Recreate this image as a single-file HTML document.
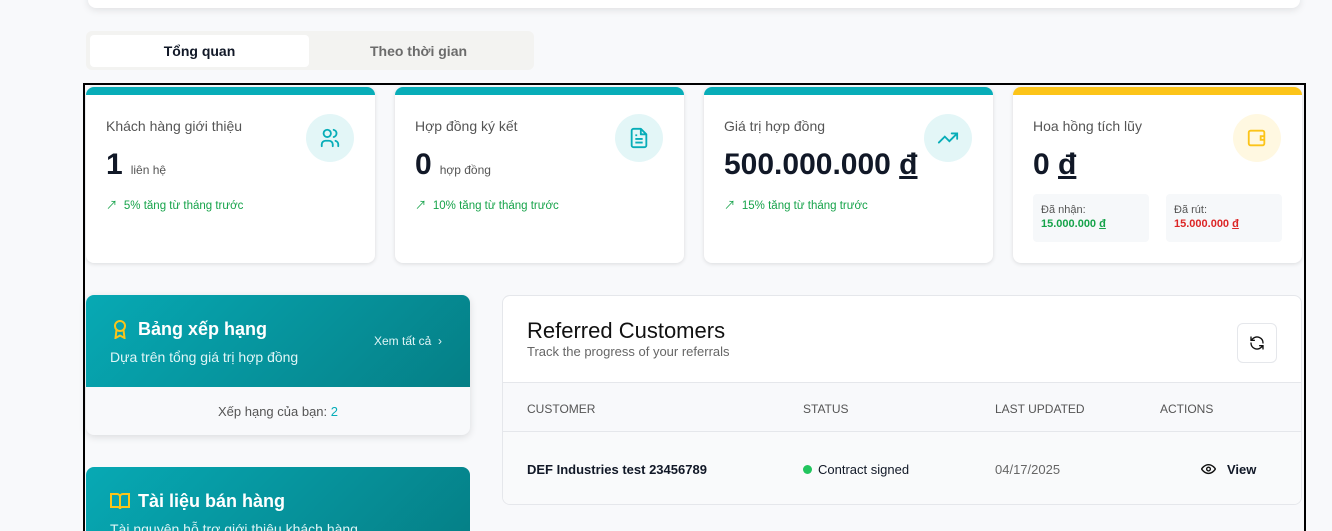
<!DOCTYPE html>
<html style="height:531px;overflow:hidden"><head><meta charset="utf-8"><style>
*{box-sizing:border-box;margin:0;padding:0}
body{width:1332px;height:531px;overflow:hidden;background:#f8f9fb;font-family:"Liberation Sans","Noto Sans CJK SC",sans-serif;position:relative;color:#111827}
.abs{position:absolute}
.topbar{left:88px;top:-10px;width:1212px;height:18px;background:#fff;border-radius:8px;box-shadow:0 2px 8px rgba(0,0,0,.1)}
.tabs{left:86px;top:31px;width:448px;height:39px;background:#f3f3f1;border-radius:6px}
.tab1{left:90px;top:35px;width:219px;height:32px;background:#fff;border-radius:4px;font-size:14px;font-weight:bold;text-align:center;line-height:32px}
.tab2{left:309px;top:35px;width:219px;height:32px;font-size:14px;color:#6b6b6b;font-weight:bold;text-align:center;line-height:32px}
.frame{left:83px;top:83px;width:1223px;height:460px;border:2px solid #000}
.card{background:#fff;border-radius:8px;box-shadow:0 1px 4px rgba(0,0,0,.12);overflow:hidden;top:87px;width:289px;height:176px}
.card .bar{height:8px;background:#07adb8}
.card .t{position:absolute;left:20px;top:31px;font-size:14px;color:#555}
.card .v{position:absolute;left:20px;top:61px;font-size:30px;font-weight:bold;color:#111827}
.card .v small{font-size:12px;font-weight:normal;color:#555;margin-left:8px}
.card .g{position:absolute;left:20px;top:110px;font-size:11.5px;color:#16a34a}
.ic{position:absolute;left:220px;top:27px;width:48px;height:48px;border-radius:50%;background:#e3f6f7;display:flex;align-items:center;justify-content:center}
.sub{position:absolute;top:107px;width:116px;height:48px;background:#f6f8fa;border-radius:4px;font-size:11px;color:#555;padding:10px 8px}
.sub b{display:block;font-size:11px;margin-top:2px}
.lb{left:86px;top:295px;width:384px;height:140px;border-radius:8px;overflow:hidden;box-shadow:0 2px 8px rgba(0,0,0,.12);background:#f8f9fb}
.grad{background:linear-gradient(135deg,#07a9b4,#057f86);color:#fff}
.tbl{left:502px;top:295px;width:800px;height:210px;background:#fff;border:1px solid #e5e7eb;border-radius:8px;overflow:hidden}
.th{font-size:12px;color:#555;position:absolute;top:106px}
.td{font-size:13px;position:absolute;top:166px}
</style></head><body>
<div class="abs topbar"></div>
<div class="abs tabs"></div>
<div class="abs tab1">Tổng quan</div>
<div class="abs tab2">Theo thời gian</div>
<div class="abs frame"></div>

<div class="abs card" style="left:86px"><div class="bar"></div>
<div class="t">Khách hàng giới thiệu</div>
<div class="v">1<small>liên hệ</small></div>
<div class="g">↗&nbsp; 5% tăng từ tháng trước</div>
<div class="ic"><svg width="22" height="22" viewBox="0 0 24 24" fill="none" stroke="#07adb8" stroke-width="2" stroke-linecap="round"><circle cx="9" cy="7" r="4"/><path d="M3 21v-2a4 4 0 0 1 4-4h4a4 4 0 0 1 4 4v2M16 3.1a4 4 0 0 1 0 7.8M21 21v-2a4 4 0 0 0-3-3.9"/></svg></div></div>

<div class="abs card" style="left:395px"><div class="bar"></div>
<div class="t">Hợp đồng ký kết</div>
<div class="v">0<small>hợp đồng</small></div>
<div class="g">↗&nbsp; 10% tăng từ tháng trước</div>
<div class="ic"><svg width="22" height="22" viewBox="0 0 24 24" fill="none" stroke="#07adb8" stroke-width="2" stroke-linejoin="round"><path d="M14 2H6a2 2 0 0 0-2 2v16a2 2 0 0 0 2 2h12a2 2 0 0 0 2-2V8z"/><path d="M14 2v6h6M8 13h8M8 17h8M8 9h2"/></svg></div></div>

<div class="abs card" style="left:704px"><div class="bar"></div>
<div class="t">Giá trị hợp đồng</div>
<div class="v">500.000.000 <u>đ</u></div>
<div class="g">↗&nbsp; 15% tăng từ tháng trước</div>
<div class="ic"><svg width="22" height="22" viewBox="0 0 24 24" fill="none" stroke="#07adb8" stroke-width="2" stroke-linecap="round"><path d="M22 7l-8.5 8.5-5-5L2 17M16 7h6v6"/></svg></div></div>

<div class="abs card" style="left:1013px"><div class="bar" style="background:#fcc419"></div>
<div class="t">Hoa hồng tích lũy</div>
<div class="v">0 <u>đ</u></div>
<div class="ic" style="background:#fff8e1"><svg width="22" height="22" viewBox="0 0 24 24" fill="none" stroke="#fcc419" stroke-width="2"><rect x="3" y="4" width="17" height="16" rx="2"/><path d="M20 10h-4v4h4"/></svg></div>
<div class="sub" style="left:20px">Đã nhận:<b style="color:#16a34a">15.000.000 <u>đ</u></b></div>
<div class="sub" style="left:153px">Đã rút:<b style="color:#dc2626">15.000.000 <u>đ</u></b></div></div>

<div class="abs lb">
<div class="grad" style="height:92px;position:relative">
<svg class="abs" style="left:26px;top:24px" width="16" height="20" viewBox="0 0 16 20" fill="none" stroke="#fcc419" stroke-width="2"><circle cx="8" cy="7" r="5"/><path d="M4.5 11l-1 8 4.5-2.5 4.5 2.5-1-8"/></svg>
<div class="abs" style="left:52px;top:24px;font-size:18px;font-weight:bold">Bảng xếp hạng</div>
<div class="abs" style="left:24px;top:54px;font-size:14px;color:#e0f5f6">Dựa trên tổng giá trị hợp đồng</div>
<div class="abs" style="left:288px;top:39px;font-size:12px;color:#e0f5f6">Xem tất cả &nbsp;›</div>
</div>
<div style="text-align:center;font-size:13px;color:#555;margin-top:17px">Xếp hạng của bạn: <b style="color:#07adb8;font-weight:normal">2</b></div>
</div>

<div class="abs grad" style="left:86px;top:467px;width:384px;height:80px;border-radius:8px">
<svg class="abs" style="left:24px;top:26px" width="20" height="17" viewBox="0 0 20 17" fill="none" stroke="#fcc419" stroke-width="2"><path d="M1 1h6a3 3 0 0 1 3 3v12a2 2 0 0 0-2-2H1zM19 1h-6a3 3 0 0 0-3 3v12a2 2 0 0 1 2-2h7z"/></svg>
<div class="abs" style="left:52px;top:24px;font-size:18px;font-weight:bold">Tài liệu bán hàng</div>
<div class="abs" style="left:24px;top:54px;font-size:14px;color:#e0f5f6">Tài nguyên hỗ trợ giới thiệu khách hàng</div>
</div>

<div class="abs tbl">
<div class="abs" style="left:24px;top:22px;font-size:22px;color:#111">Referred Customers</div>
<div class="abs" style="left:24px;top:48px;font-size:13px;color:#666">Track the progress of your referrals</div>
<div class="abs" style="left:734px;top:27px;width:40px;height:40px;border:1px solid #e5e7eb;border-radius:6px;display:flex;align-items:center;justify-content:center"><svg width="16" height="16" viewBox="0 0 24 24" fill="none" stroke="#111" stroke-width="2" stroke-linecap="round"><path d="M21 12a9 9 0 0 0-15-6.7L3 8M3 3v5h5M3 12a9 9 0 0 0 15 6.7L21 16M21 21v-5h-5"/></svg></div>
<div class="abs" style="left:0;top:86px;width:800px;height:50px;background:#f8f9fb;border-top:1px solid #e5e7eb;border-bottom:1px solid #e5e7eb"></div>
<div class="th" style="left:24px">CUSTOMER</div>
<div class="th" style="left:300px">STATUS</div>
<div class="th" style="left:492px">LAST UPDATED</div>
<div class="th" style="left:657px">ACTIONS</div>
<div class="abs" style="left:0;top:136px;width:800px;height:74px;background:#f9fafb"></div>
<div class="td" style="left:24px;font-weight:bold">DEF Industries test 23456789</div>
<div class="td" style="left:300px"><span style="display:inline-block;width:9px;height:9px;border-radius:50%;background:#22c55e;margin-right:6px"></span>Contract signed</div>
<div class="td" style="left:492px;color:#666">04/17/2025</div>
<div class="td" style="left:698px;font-weight:bold"><svg width="15" height="12" viewBox="0 0 24 18" fill="none" stroke="#111" stroke-width="2.2" style="vertical-align:-1px;margin-right:11px"><path d="M1 9s4-7 11-7 11 7 11 7-4 7-11 7S1 9 1 9z"/><circle cx="12" cy="9" r="3"/></svg>View</div>
</div>
</body></html>
